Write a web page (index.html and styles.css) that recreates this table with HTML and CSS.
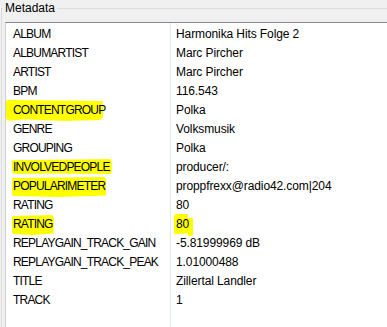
FILE: index.html
```html
<!DOCTYPE html>
<html lang="de">
<head>
<meta charset="utf-8">
<title>Metadata</title>
<link rel="stylesheet" href="styles.css">
</head>
<body>
<fieldset class="group">
  <legend class="group-title">Metadata</legend>
  <div class="tag-list">
    <div class="col col-key">
      <div class="cell">ALBUM</div>
      <div class="cell">ALBUMARTIST</div>
      <div class="cell">ARTIST</div>
      <div class="cell">BPM</div>
      <div class="cell"><span class="mark mark-wide">CONTENTGROUP</span></div>
      <div class="cell">GENRE</div>
      <div class="cell">GROUPING</div>
      <div class="cell"><span class="mark mark-short">INVOLVEDPEOPLE</span></div>
      <div class="cell"><span class="mark mark-low">POPULARIMETER</span></div>
      <div class="cell">RATING</div>
      <div class="cell"><span class="mark mark-low">RATING</span></div>
      <div class="cell">REPLAYGAIN_TRACK_GAIN</div>
      <div class="cell">REPLAYGAIN_TRACK_PEAK</div>
      <div class="cell">TITLE</div>
      <div class="cell">TRACK</div>
    </div>
    <div class="col col-value">
      <div class="cell">Harmonika Hits Folge 2</div>
      <div class="cell">Marc Pircher</div>
      <div class="cell">Marc Pircher</div>
      <div class="cell">116.543</div>
      <div class="cell">Polka</div>
      <div class="cell">Volksmusik</div>
      <div class="cell">Polka</div>
      <div class="cell">producer/:</div>
      <div class="cell">proppfrexx@radio42.com|204</div>
      <div class="cell">80</div>
      <div class="cell"><span class="mark mark-num">80</span></div>
      <div class="cell">-5.81999969 dB</div>
      <div class="cell">1.01000488</div>
      <div class="cell">Zillertal Landler</div>
      <div class="cell">1</div>
    </div>
  </div>
</fieldset>
</body>
</html>
```

FILE: styles.css
```css
html, body {
  margin: 0;
  height: 100%;
  overflow: hidden;
}

body {
  background: #f0f0f0;
  font-family: "Liberation Sans", Arial, sans-serif;
  font-size: 12px;
  color: #000;
}

/* group box: only its top and left edges fall inside the window */
.group {
  display: flex;
  flex-direction: column;
  margin: 0 0 0 1px;
  padding: 6px 0 0 3px;
  border: 1px solid #dcdcdc;
  border-right: none;
  border-bottom: none;
  min-width: 0;
  height: 100%;
  box-sizing: border-box;
}

.group-title {
  padding: 0 2px;
  margin-left: -2px;
  line-height: 16px;
  color: #000;
}

/* two-column tag list */
.tag-list {
  flex: 1;
  min-height: 0;
  display: flex;
  background: #fff;
  border-top: 1px solid #828790;
  border-left: 1px solid #cfcfcf;
}

.col {
  padding-top: 2px;
}

.col-key {
  width: 164px;
  flex: none;
  border-right: 1px solid #e3e9f1;
  letter-spacing: -0.8px;
}

.col-value {
  flex: 1;
  letter-spacing: -0.1px;
}

.cell {
  height: 19px;
  line-height: 19px;
  white-space: nowrap;
  padding-left: 7px;
}

.col-value .cell {
  padding-left: 5px;
}

/* hand-drawn yellow highlighter strokes */
.mark {
  position: relative;
  display: inline-block;
  z-index: 0;
}

.mark::before {
  content: "";
  position: absolute;
  z-index: -1;
  background: #ffff00;
  border-radius: 2px 3px 2px 4px;
}

.mark-wide::before {
  left: -7px;
  right: 2px;
  top: -1px;
  bottom: -1px;
  clip-path: polygon(0 0, 100% 5%, 100% 80%, 97% 95%, 60% 100%, 20% 92%, 0 100%);
}

.mark-short::before {
  left: -1px;
  right: -2px;
  top: 1px;
  bottom: 3px;
  clip-path: polygon(0 8%, 100% 0, 100% 100%, 40% 96%, 0 100%);
}

.mark-low::before {
  left: -1px;
  right: -1px;
  top: 0;
  bottom: -1px;
  clip-path: polygon(0 5%, 100% 0, 100% 92%, 50% 100%, 0 95%);
}

.mark-num::before {
  left: -2px;
  right: -4px;
  top: -1px;
  bottom: -2px;
  clip-path: polygon(0 0, 72% 0, 72% 18%, 100% 18%, 100% 100%, 72% 100%, 72% 88%, 0 92%);
}
```
